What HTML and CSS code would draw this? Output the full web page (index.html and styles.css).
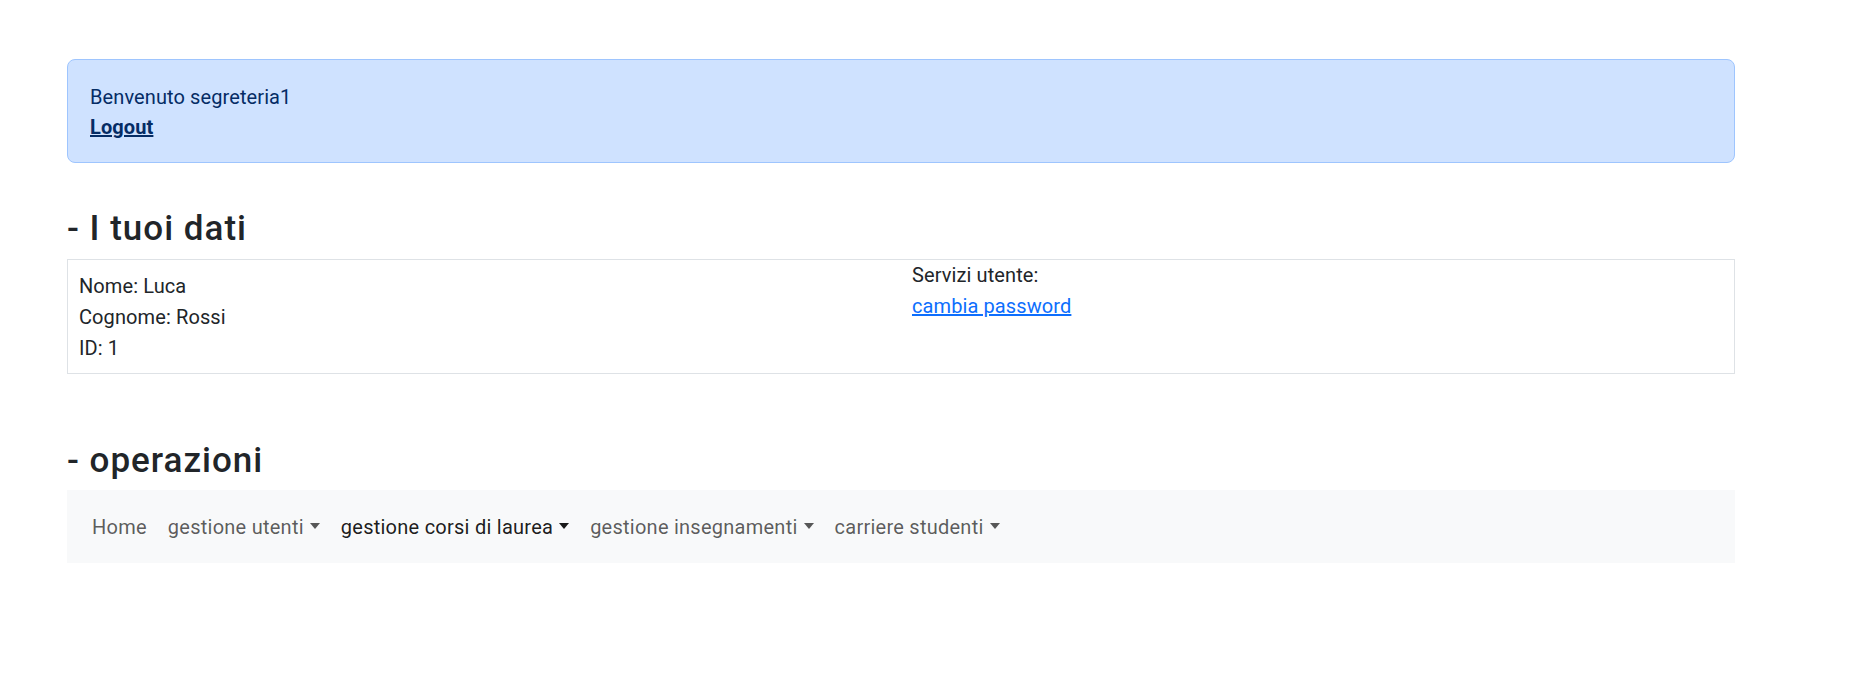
FILE: index.html
```html
<!DOCTYPE html>
<html lang="it">
<head>
<meta charset="utf-8">
<title>Segreteria</title>
<link rel="stylesheet" href="styles.css">
</head>
<body>
<div class="page">
  <div class="alert">
    <div>Benvenuto segreteria1</div>
    <a class="alert-link" href="#">Logout</a>
  </div>

  <h3 class="section-title">- I tuoi dati</h3>
  <div class="data-box">
    <div class="col col-left">
      <div>Nome: Luca</div>
      <div>Cognome: Rossi</div>
      <div>ID: 1</div>
    </div>
    <div class="col col-right">
      <div>Servizi utente:</div>
      <a class="link" href="#">cambia password</a>
    </div>
  </div>

  <h3 class="section-title section-ops">- operazioni</h3>
  <nav class="navbar">
    <ul class="nav">
      <li><a class="nav-link" href="#">Home</a></li>
      <li><a class="nav-link toggle" href="#">gestione utenti</a></li>
      <li><a class="nav-link toggle active" href="#">gestione corsi di laurea</a></li>
      <li><a class="nav-link toggle" href="#">gestione insegnamenti</a></li>
      <li><a class="nav-link toggle" href="#">carriere studenti</a></li>
    </ul>
  </nav>
</div>
</body>
</html>
```

FILE: styles.css
```css
html, body {
  margin: 0;
  padding: 0;
  background: #ffffff;
}

body {
  font-family: Roboto, "Liberation Sans", sans-serif;
  font-size: 20px;
  line-height: 30px;
  letter-spacing: 0.1px;
  color: #212529;
}

.page {
  padding: 59px 138px 0 67px;
}

.alert {
  background: #cfe2ff;
  border: 1px solid #9ec5fe;
  border-radius: 8px;
  color: #052c65;
  padding: 22px 22px 20px 22px;
}

.alert-link {
  color: #052c65;
  font-weight: 700;
  text-decoration: underline;
}

.section-title {
  font-size: 35px;
  font-weight: 500;
  line-height: 42px;
  letter-spacing: 1px;
  margin: 45px 0 9px 0;
  color: #212529;
}

.section-ops {
  margin: 66px 0 8px 0;
}

.data-box {
  border: 1px solid #dee2e6;
  display: grid;
  grid-template-columns: 1fr 1fr;
  line-height: 31px;
}

.col {
  padding: 0 11px;
}

.col-left {
  padding-top: 11px;
  padding-bottom: 9px;
}

.link {
  color: #0d6efd;
  text-decoration: underline;
}

.navbar {
  background: #f8f9fa;
  padding: 12px 15px 11px 15px;
}

.nav {
  list-style: none;
  margin: 0;
  padding: 0;
  display: flex;
}

.nav-link {
  display: block;
  padding: 10px 11px 10px 10px;
  letter-spacing: 0.25px;
  color: rgba(0, 0, 0, 0.65);
  text-decoration: none;
}

.nav-link.active {
  color: rgba(0, 0, 0, 0.9);
}

.toggle::after {
  content: "";
  display: inline-block;
  margin-left: 6px;
  vertical-align: 5px;
  border-top: 6px solid;
  border-right: 5px solid transparent;
  border-left: 5px solid transparent;
  border-bottom: 0;
}
```
